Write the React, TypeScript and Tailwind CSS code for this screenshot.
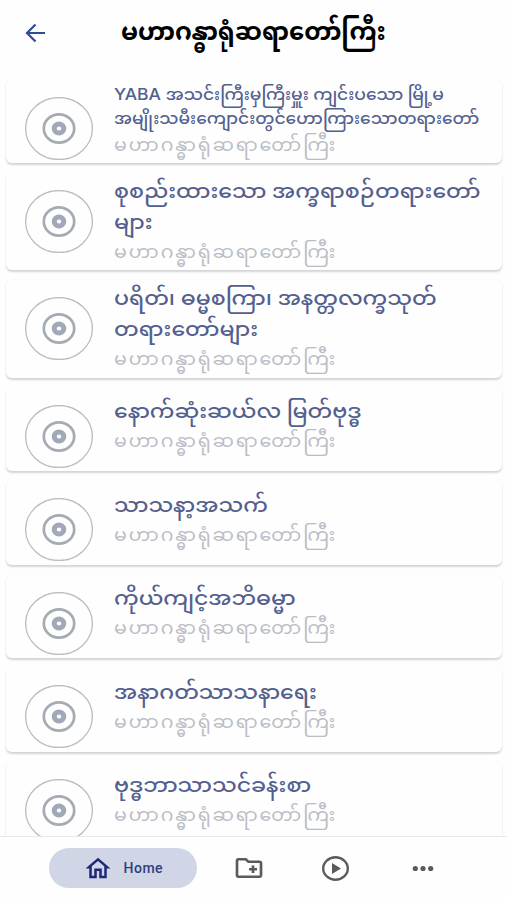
type Talk = { latin?: string; lines: string[]; kind: 'small' | 'double' | 'single' };

const AUTHOR = 'မဟာဂန္ဓာရုံဆရာတော်ကြီး';

const talks: Talk[] = [
  { latin: 'YABA', lines: ['အသင်းကြီးမှကြီးမှူး ကျင်းပသော မြို့မ', 'အမျိုးသမီးကျောင်းတွင်ဟောကြားသောတရားတော်'], kind: 'small' },
  { lines: ['စုစည်းထားသော အက္ခရာစဉ်တရားတော်', 'များ'], kind: 'double' },
  { lines: ['ပရိတ်၊ ဓမ္မစကြာ၊ အနတ္တလက္ခသုတ်', 'တရားတော်များ'], kind: 'double' },
  { lines: ['နောက်ဆုံးဆယ်လ မြတ်ဗုဒ္ဓ'], kind: 'single' },
  { lines: ['သာသနာ့အသက်'], kind: 'single' },
  { lines: ['ကိုယ်ကျင့်အဘိဓမ္မာ'], kind: 'single' },
  { lines: ['အနာဂတ်သာသနာရေး'], kind: 'single' },
  { lines: ['ဗုဒ္ဓဘာသာသင်ခန်းစာ'], kind: 'single' },
];

const cardStyle = {
  small: 'h-[83.5px] pt-[4px]',
  double: 'h-[97.3px] pt-[5px]',
  single: 'h-[83.5px] pt-[10.5px]',
};

const lineStyle = {
  small: 'text-[17.08px] h-6 leading-6',
  double: 'text-[22px] h-[30.5px] leading-[30px]',
  single: 'text-[22px] h-[30px] leading-[30px]',
};

function Disc() {
  return (
    <svg className="mt-[17px] ml-[19px] h-[63px] w-[68px] shrink-0" viewBox="0 0 68 63" fill="none">
      <ellipse cx="34" cy="31.5" rx="33.4" ry="31" stroke="#bcbdbf" strokeWidth="1.3" />
      <ellipse cx="34" cy="31.5" rx="15.2" ry="14.2" stroke="#a5abb3" strokeWidth="2.7" />
      <ellipse cx="34" cy="31.5" rx="4.8" ry="4.5" stroke="#a0a9b8" strokeWidth="5" />
    </svg>
  );
}

export default function App() {
  return (
    <div className="flex h-[900px] w-[507px] flex-col overflow-hidden bg-[#fefefe] font-['Noto_Sans_Myanmar','Noto_Sans',sans-serif]">
      <header className="flex h-[79.7px] shrink-0 items-start">
        <svg className="mt-[22px] ml-[24px] h-[22px] w-[22px]" viewBox="0 0 22 22" fill="none" stroke="#2f4c94" strokeWidth="2.2">
          <path d="M21 11H3M11.5 2.5 3 11l8.5 8.5" />
        </svg>
        <h1 className="mt-[15px] ml-[75px] h-10 text-[24.4px] leading-10 font-bold whitespace-nowrap text-black">{AUTHOR}</h1>
      </header>
      <main className="flex min-h-0 flex-1 flex-col gap-[10px] overflow-hidden px-[5.5px]">
        {talks.map((t) => (
          <article key={t.lines[0]} className="flex shrink-0 items-start rounded-md bg-[#fefefe] shadow-[0_1.5px_2px_rgba(0,0,0,0.17)]">
            <Disc />
            <div className={`ml-[21.5px] ${cardStyle[t.kind]}`}>
              <h2 className="font-medium text-[#53608f]">
                {t.lines.map((line, i) => (
                  <span key={line} className={`block scale-y-[0.93] whitespace-nowrap ${lineStyle[t.kind]}`}>
                    {i === 0 && t.latin && <span className="mr-[5px] font-[Inter,sans-serif] text-[17.5px] leading-none tracking-[-0.1px]">{t.latin}</span>}
                    {line}
                  </span>
                ))}
              </h2>
              <p className="h-[30px] scale-y-[0.94] text-[19px] leading-[30px] tracking-[1.9px] whitespace-nowrap text-[#bbbdc6]">{AUTHOR}</p>
            </div>
          </article>
        ))}
      </main>
      <nav className="flex h-[64px] shrink-0 items-start border-t border-[#e9e9eb] bg-[#fefefe] pt-[11px]">
        <a className="ml-[49px] flex h-10 w-[148px] items-center rounded-full bg-[#d0d6e5] pl-[33.5px] text-[#1d2878]">
          <svg className="h-[29px] w-[30px]" viewBox="0 0 24 24" preserveAspectRatio="none" fill="currentColor">
            <path d="M12 5.69l5 4.5V18h-2v-6H9v6H7v-7.81l5-4.5M12 3L2 12h3v8h6v-6h2v6h6v-8h3L12 3z" />
          </svg>
          <span className="ml-[11px] font-[Roboto,sans-serif] text-[14px] font-medium tracking-[0.5px] text-[#323d80]">Home</span>
        </a>
        <svg className="mt-[5px] ml-[35.5px] h-[30px] w-8" viewBox="0 0 24 24" preserveAspectRatio="none" fill="#5b5b5d">
          <path d="M20 6h-8l-2-2H4c-1.11 0-1.99.89-1.99 2L2 18c0 1.11.89 2 2 2h16c1.11 0 2-.89 2-2V8c0-1.11-.89-2-2-2zm0 12H4V6h5.17l2 2H20v10zm-8-4h2v2h2v-2h2v-2h-2v-2h-2v2h-2z" />
        </svg>
        <svg className="mt-[8px] ml-[57.5px] h-[25px] w-[27px]" viewBox="0 0 27 25" fill="none">
          <ellipse cx="13.5" cy="12.5" rx="12.3" ry="11.3" stroke="#5b5b5d" strokeWidth="2.4" />
          <path d="M10 7v11l9-5.5z" fill="#5b5b5d" />
        </svg>
        <svg className="mt-[17px] ml-[63px] h-[7px] w-[22px]" viewBox="0 0 22 7" fill="#5b5b5d">
          <circle cx="3.3" cy="3.5" r="2.6" />
          <circle cx="11" cy="3.5" r="2.6" />
          <circle cx="18.7" cy="3.5" r="2.6" />
        </svg>
      </nav>
    </div>
  );
}
